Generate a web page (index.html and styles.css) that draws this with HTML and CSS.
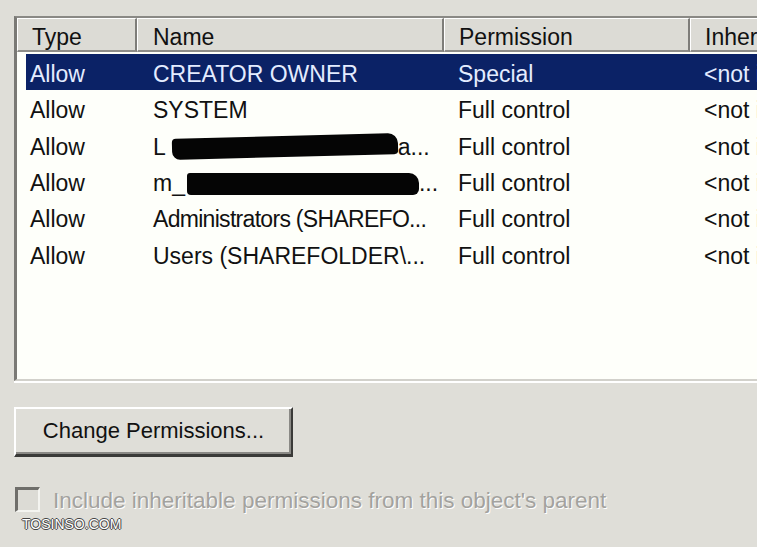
FILE: index.html
```html
<!DOCTYPE html>
<html>
<head>
<meta charset="utf-8">
<link rel="stylesheet" href="styles.css">
</head>
<body>
<div class="page">
  <div class="listview">
    <div class="header">
      <div class="hcell c1">Type</div>
      <div class="hcell c2">Name</div>
      <div class="hcell c3">Permission</div>
      <div class="hcell c4">Inherited From</div>
    </div>
    <div class="body">
      <div class="row selected">
        <div class="cell c1">Allow</div>
        <div class="cell c2">CREATOR OWNER</div>
        <div class="cell c3">Special</div>
        <div class="cell c4">&lt;not inherited&gt;</div>
      </div>
      <div class="row">
        <div class="cell c1">Allow</div>
        <div class="cell c2">SYSTEM</div>
        <div class="cell c3">Full control</div>
        <div class="cell c4">&lt;not inherited&gt;</div>
      </div>
      <div class="row">
        <div class="cell c1">Allow</div>
        <div class="cell c2">L<span class="redact r1"></span>a...</div>
        <div class="cell c3">Full control</div>
        <div class="cell c4">&lt;not inherited&gt;</div>
      </div>
      <div class="row">
        <div class="cell c1">Allow</div>
        <div class="cell c2">m_<span class="redact r2"></span>...</div>
        <div class="cell c3">Full control</div>
        <div class="cell c4">&lt;not inherited&gt;</div>
      </div>
      <div class="row">
        <div class="cell c1">Allow</div>
        <div class="cell c2 narrow">Administrators (SHAREFO...</div>
        <div class="cell c3">Full control</div>
        <div class="cell c4">&lt;not inherited&gt;</div>
      </div>
      <div class="row">
        <div class="cell c1">Allow</div>
        <div class="cell c2">Users (SHAREFOLDER\...</div>
        <div class="cell c3">Full control</div>
        <div class="cell c4">&lt;not inherited&gt;</div>
      </div>
    </div>
  </div>

  <button class="btn">Change Permissions...</button>

  <label class="check">
    <span class="box"></span>
    <span class="check-label">Include inheritable permissions from this object's parent</span>
  </label>

  <div class="watermark">TOSINSO.COM</div>
</div>
</body>
</html>
```
FILE: styles.css
```css
html, body {
  margin: 0;
  padding: 0;
  background: #dfded8;
  overflow: hidden;
}

.page {
  position: relative;
  width: 757px;
  height: 547px;
  overflow: hidden;
  padding: 16px 0 0 14px;
  box-sizing: border-box;
  font-family: "Liberation Sans", Arial, sans-serif;
  color: #111;
}

.listview {
  width: 820px;
  border-top: 2px solid #8a8985;
  border-left: 3px solid #7a7975;
  border-bottom: 2px solid #d2d1cb;
  box-shadow: 0 2px 0 #ffffff;
  background: #fefffa;
  height: 361px;
  box-sizing: content-box;
}

.header {
  display: flex;
  height: 34px;
  background: #dcdbd5;
  font-size: 23px;
}

.hcell {
  flex: none;
  display: flex;
  align-items: center;
  box-sizing: border-box;
  border-top: 1px solid #ffffff;
  border-left: 1px solid #ffffff;
  border-right: 2px solid #7e7d79;
  border-bottom: 2px solid #8e8d89;
  padding-top: 5px;
  white-space: nowrap;
  overflow: hidden;
}

.header .c1 { width: 120px; padding-left: 14px; }
.header .c2 { width: 307px; padding-left: 15px; }
.header .c3 { width: 246px; padding-left: 14px; }
.header .c4 { width: 200px; padding-left: 14px; }

.body {
  padding-top: 2px;
  padding-left: 9px;
  font-size: 23px;
}

.row {
  display: flex;
  height: 36.3px;
  align-items: center;
  white-space: nowrap;
  color: #111;
}

.row.selected {
  background: #0b2266;
  color: #e4ecff;
}

.cell {
  flex: none;
  box-sizing: border-box;
  overflow: hidden;
  padding-top: 5px;
}

.row .c1 { width: 111px; padding-left: 4px; }
.row .c2 { width: 306px; padding-left: 16px; }
.row .c3 { width: 246px; padding-left: 15px; }
.row .c4 { width: 200px; padding-left: 15px; }

.row .narrow { letter-spacing: -0.7px; }

.redact {
  display: inline-block;
  background: #050505;
  vertical-align: middle;
  position: relative;
}

.r1 {
  width: 226px;
  height: 21px;
  margin-left: 6px;
  border-radius: 4px 10px 4px 8px;
  transform: rotate(-1.5deg);
  top: -2px;
}

.r2 {
  width: 232px;
  height: 22px;
  margin-left: 2px;
  border-radius: 3px 10px 6px 4px;
  top: -1px;
}

.btn {
  display: block;
  margin-top: 26px;
  width: 279px;
  height: 50px;
  background: #dfded8;
  border: none;
  border-top: 2px solid #ffffff;
  border-left: 2px solid #ffffff;
  border-right: 2px solid #3a3a38;
  border-bottom: 3px solid #3a3a38;
  box-shadow: inset -2px -2px 0 #8a8985;
  font-family: "Liberation Sans", Arial, sans-serif;
  font-size: 22px;
  color: #111;
  padding: 0 0 2px 0;
  text-align: center;
}

.check {
  display: flex;
  align-items: center;
  margin-top: 29px;
  margin-left: 1px;
  height: 26px;
}

.box {
  width: 25px;
  height: 25px;
  box-sizing: border-box;
  border-top: 3px solid #6f6e6a;
  border-left: 3px solid #6f6e6a;
  border-right: 2px solid #f4f4f0;
  border-bottom: 2px solid #f4f4f0;
  background: #dcdbd5;
  flex: none;
}

.check-label {
  margin-left: 13px;
  padding-top: 3px;
  font-size: 22.5px;
  color: #a3a29e;
  text-shadow: 1px 1px 0 #ffffff;
  white-space: nowrap;
}

.watermark {
  position: absolute;
  left: 22px;
  top: 516px;
  font-size: 14px;
  color: #ffffff;
  text-shadow: 1px 0 0 #444, -1px 0 0 #444, 0 1px 0 #444, 0 -1px 0 #444;
}
```
